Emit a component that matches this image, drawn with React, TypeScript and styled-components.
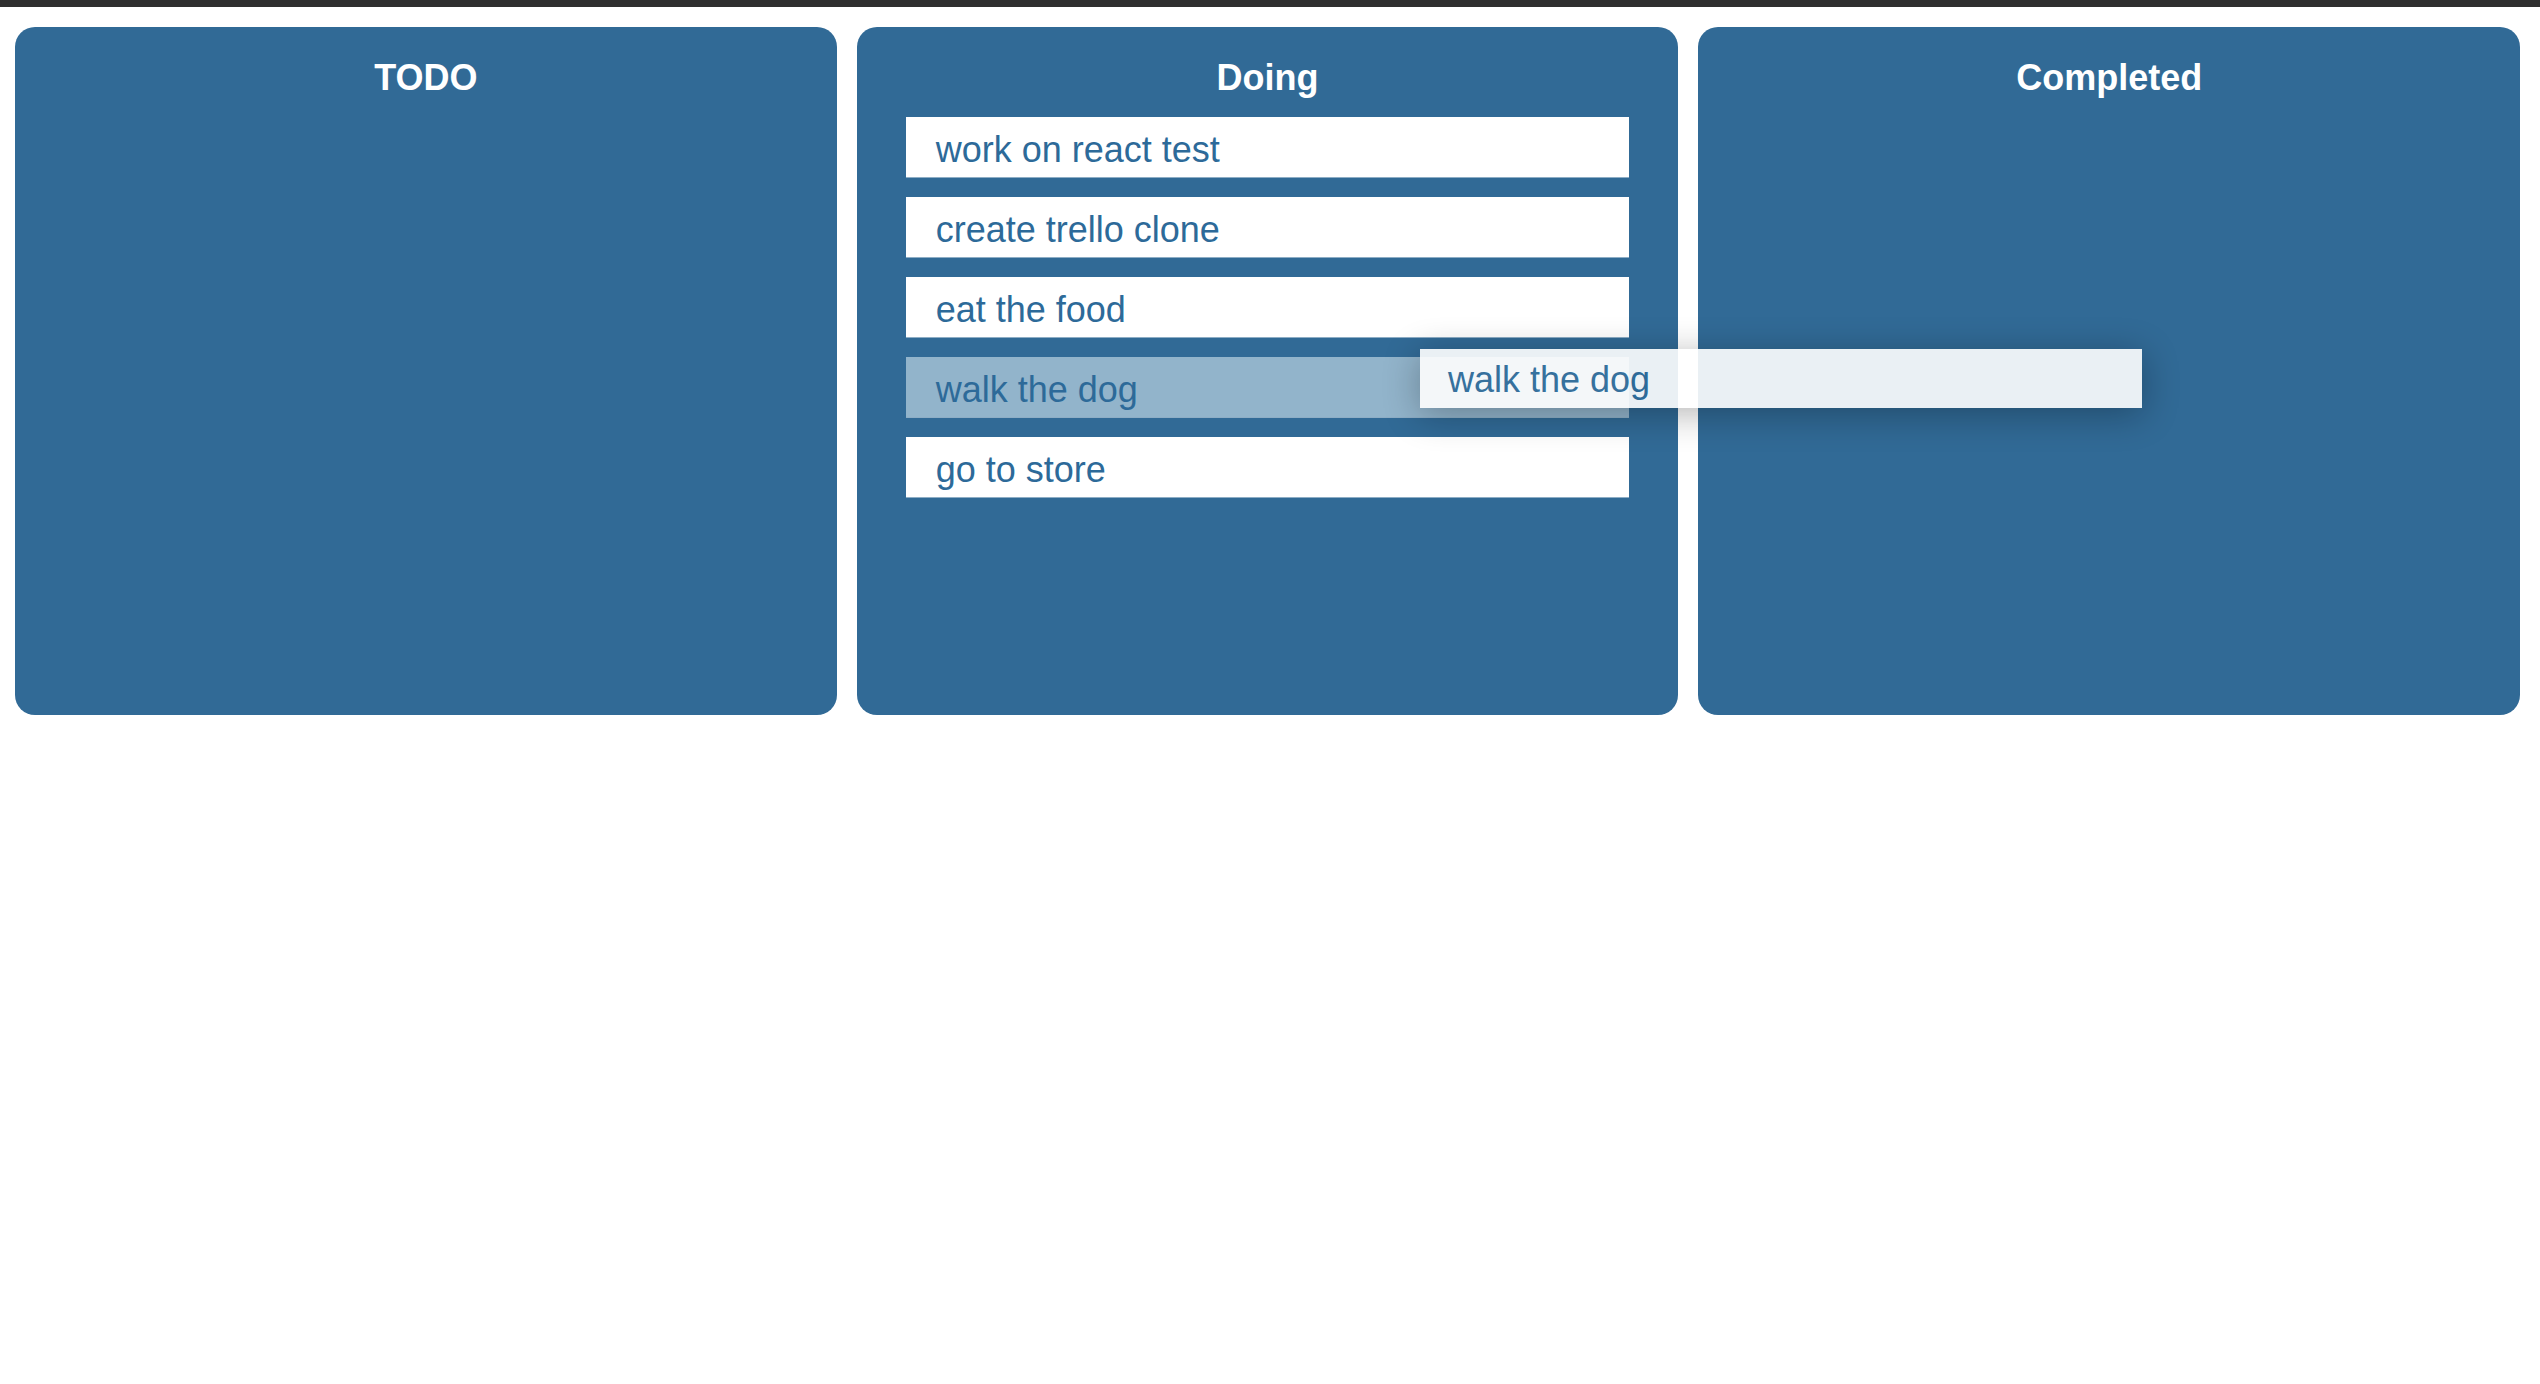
import React from 'react'
import styled, { createGlobalStyle } from 'styled-components'

const GlobalStyle = createGlobalStyle`
  html, body {
    margin: 0;
    padding: 0;
    background: #ffffff;
    font-family: 'Liberation Sans', Arial, Helvetica, sans-serif;
  }
`

const TopBar = styled.div`
  height: 7px;
  background: #2f2f2f;
`

const Board = styled.div`
  position: relative;
  display: grid;
  grid-template-columns: repeat(3, 1fr);
  gap: 20px;
  padding: 20px 20px 0 15px;
`

const Column = styled.section`
  height: 688px;
  box-sizing: border-box;
  padding-top: 30px;
  border-radius: 20px;
  background: #316a96;
`

const ColumnTitle = styled.h2`
  margin: 0 0 19px;
  font-size: 36px;
  line-height: 41px;
  font-weight: 700;
  text-align: center;
  color: #ffffff;
`

const CardList = styled.div`
  display: flex;
  flex-direction: column;
  gap: 20px;
  padding: 0 49px;
`

const Card = styled.div<{ $placeholder?: boolean }>`
  height: 60px;
  box-sizing: border-box;
  padding: 5px 30px 0;
  font-size: 36px;
  line-height: 55px;
  color: #2d6a99;
  background: ${(p) => (p.$placeholder ? '#92b4cb' : '#ffffff')};
  box-shadow: 0 1px 0 rgba(255, 255, 255, 0.45);
`

// the card being dragged floats over the board
const DragPreview = styled.div`
  position: absolute;
  left: 1420px;
  top: 342px;
  width: 722px;
  height: 59px;
  box-sizing: border-box;
  padding: 3px 28px 0;
  font-size: 36px;
  line-height: 56px;
  color: #2d6a99;
  background: #ffffff;
  opacity: 0.9;
  box-shadow: 0 6px 36px rgba(0, 0, 0, 0.32);
  pointer-events: none;
`

interface Task {
  id: string
  text: string
  dragging?: boolean
}

const columns: { title: string; tasks: Task[] }[] = [
  { title: 'TODO', tasks: [] },
  {
    title: 'Doing',
    tasks: [
      { id: '1', text: 'work on react test' },
      { id: '2', text: 'create trello clone' },
      { id: '3', text: 'eat the food' },
      { id: '4', text: 'walk the dog', dragging: true },
      { id: '5', text: 'go to store' },
    ],
  },
  { title: 'Completed', tasks: [] },
]

export default function App() {
  const dragged = columns.flatMap((c) => c.tasks).find((t) => t.dragging)

  return (
    <>
      <GlobalStyle />
      <TopBar />
      <Board>
        {columns.map((col) => (
          <Column key={col.title}>
            <ColumnTitle>{col.title}</ColumnTitle>
            <CardList>
              {col.tasks.map((task) => (
                <Card key={task.id} $placeholder={task.dragging}>
                  {task.text}
                </Card>
              ))}
            </CardList>
          </Column>
        ))}
        {dragged && <DragPreview>{dragged.text}</DragPreview>}
      </Board>
    </>
  )
}
